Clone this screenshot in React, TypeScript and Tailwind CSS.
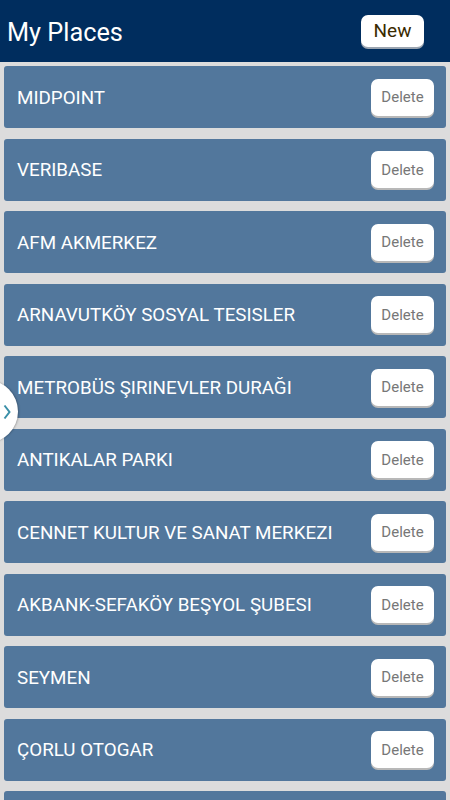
const places = [
  "MIDPOINT",
  "VERIBASE",
  "AFM AKMERKEZ",
  "ARNAVUTKÖY SOSYAL TESISLER",
  "METROBÜS ŞIRINEVLER DURAĞI",
  "ANTIKALAR PARKI",
  "CENNET KULTUR VE SANAT MERKEZI",
  "AKBANK-SEFAKÖY BEŞYOL ŞUBESI",
  "SEYMEN",
  "ÇORLU OTOGAR",
  "",
];

function PlaceRow({ name }: { name: string }) {
  return (
    <div className="flex h-[62px] shrink-0 items-center justify-between rounded-[3px] bg-[#52779c] pl-[13px] pr-[12px]">
      <span className="pt-[2px] text-[18.8px] text-white">{name}</span>
      {name && (
        <button className="flex h-[37px] w-[63px] items-center justify-center rounded-[7px] bg-white pt-[1px] text-[15px] text-[#777] shadow-[0_2px_0_#b8b8b8]">
          Delete
        </button>
      )}
    </div>
  );
}

export default function App() {
  return (
    <div
      className="relative flex h-[800px] w-[450px] flex-col overflow-hidden bg-[#dcdcdc]"
      style={{ fontFamily: "Roboto, 'Liberation Sans', sans-serif" }}
    >
      <div className="flex h-[62px] shrink-0 items-center justify-between bg-[#002d5e] pl-[7px] pr-[26px]">
        <h1 className="pt-[4px] text-[25.3px] text-white">My Places</h1>
        <button className="flex h-[32px] w-[63px] items-center justify-center rounded-[7px] bg-white pt-[1px] text-[19px] text-[#3a2a00] shadow-[0_2px_0_#9aa4b0]">
          New
        </button>
      </div>

      <div className="flex flex-col gap-[10.5px] px-[4px] pt-[4px]">
        {places.map((p, i) => (
          <PlaceRow key={i} name={p} />
        ))}
      </div>

      <div className="absolute left-[-14px] top-[380px] flex h-[63px] w-[32px] items-center justify-end rounded-r-full bg-white pr-[7px] shadow-[1px_0_2px_rgba(0,0,0,0.25)]">
        <svg width="8" height="16" viewBox="0 0 8 16">
          <path d="M1.5 1.5 L6.5 8 L1.5 14.5" stroke="#3a8fa8" strokeWidth="2" fill="none" />
        </svg>
      </div>
    </div>
  );
}
